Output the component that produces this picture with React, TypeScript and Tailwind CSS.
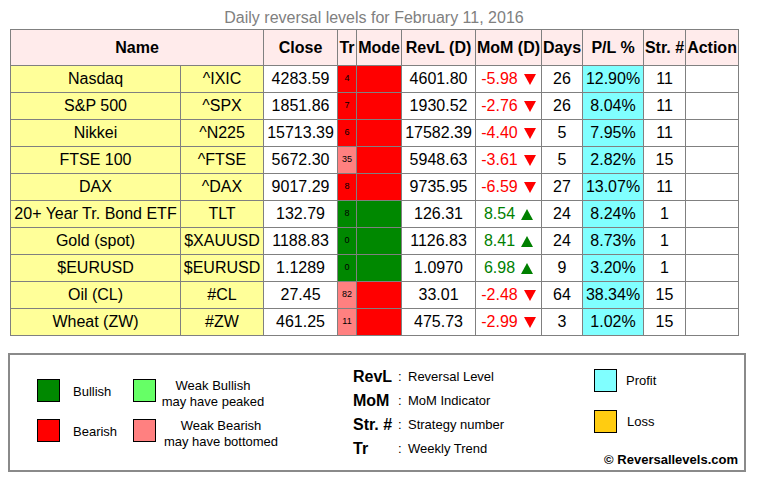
import React from "react";

type Row = {
  name: string;
  ticker: string;
  close: string;
  tr: number;
  trWeak: boolean;
  bull: boolean;
  revl: string;
  mom: string;
  days: number;
  pl: string;
  str: number;
};

const rows: Row[] = [
  { name: "Nasdaq", ticker: "^IXIC", close: "4283.59", tr: 4, trWeak: false, bull: false, revl: "4601.80", mom: "-5.98", days: 26, pl: "12.90%", str: 11 },
  { name: "S&P 500", ticker: "^SPX", close: "1851.86", tr: 7, trWeak: false, bull: false, revl: "1930.52", mom: "-2.76", days: 26, pl: "8.04%", str: 11 },
  { name: "Nikkei", ticker: "^N225", close: "15713.39", tr: 6, trWeak: false, bull: false, revl: "17582.39", mom: "-4.40", days: 5, pl: "7.95%", str: 11 },
  { name: "FTSE 100", ticker: "^FTSE", close: "5672.30", tr: 35, trWeak: true, bull: false, revl: "5948.63", mom: "-3.61", days: 5, pl: "2.82%", str: 15 },
  { name: "DAX", ticker: "^DAX", close: "9017.29", tr: 8, trWeak: false, bull: false, revl: "9735.95", mom: "-6.59", days: 27, pl: "13.07%", str: 11 },
  { name: "20+ Year Tr. Bond ETF", ticker: "TLT", close: "132.79", tr: 8, trWeak: false, bull: true, revl: "126.31", mom: "8.54", days: 24, pl: "8.24%", str: 1 },
  { name: "Gold (spot)", ticker: "$XAUUSD", close: "1188.83", tr: 0, trWeak: false, bull: true, revl: "1126.83", mom: "8.41", days: 24, pl: "8.73%", str: 1 },
  { name: "$EURUSD", ticker: "$EURUSD", close: "1.1289", tr: 0, trWeak: false, bull: true, revl: "1.0970", mom: "6.98", days: 9, pl: "3.20%", str: 1 },
  { name: "Oil (CL)", ticker: "#CL", close: "27.45", tr: 82, trWeak: true, bull: false, revl: "33.01", mom: "-2.48", days: 64, pl: "38.34%", str: 15 },
  { name: "Wheat (ZW)", ticker: "#ZW", close: "461.25", tr: 11, trWeak: true, bull: false, revl: "475.73", mom: "-2.99", days: 3, pl: "1.02%", str: 15 },
];

const cell = "border border-[#808080] p-0 text-center";

function trColor(r: Row) {
  if (r.bull) return r.trWeak ? "bg-[#66ff66]" : "bg-[#008800]";
  return r.trWeak ? "bg-[#ff8080]" : "bg-[#ff0000]";
}

function Arrow({ up }: { up: boolean }) {
  return (
    <svg width="12" height="11" viewBox="0 0 12 11" className="ml-[6px] inline-block">
      {up ? (
        <polygon points="6,0 12,11 0,11" fill="#008000" />
      ) : (
        <polygon points="0,0 12,0 6,11" fill="#ff0000" />
      )}
    </svg>
  );
}

function Abbr({ label, text }: { label: string; text: string }) {
  return (
    <div className="flex h-[24px] items-center">
      <span className="w-[45px] text-[16px] font-bold text-black">{label}</span>
      <span className="w-[10px] text-[13px] text-black">:</span>
      <span className="text-[13px] text-black">{text}</span>
    </div>
  );
}

export default function App() {
  return (
    <div
      className="h-[480px] w-[760px] bg-white text-black"
      style={{ fontFamily: '"Liberation Sans", Arial, sans-serif' }}
    >
      <div className="pl-[10px] pt-[7px]">
        <div className="w-[728px] text-center text-[16px] leading-[22px] text-[#808080]">
          Daily reversal levels for February 11, 2016
        </div>
        <table className="w-[728px] table-fixed border-collapse border border-[#808080] text-[16px]">
          <colgroup>
            <col className="w-[170px]" />
            <col className="w-[83px]" />
            <col className="w-[74px]" />
            <col className="w-[19px]" />
            <col className="w-[45px]" />
            <col className="w-[74px]" />
            <col className="w-[66px]" />
            <col className="w-[41px]" />
            <col className="w-[61px]" />
            <col className="w-[42px]" />
            <col className="w-[53px]" />
          </colgroup>
          <thead>
            <tr className="h-[36px] bg-[#ffebeb] font-bold">
              <th colSpan={2} className={cell}>Name</th>
              <th className={cell}>Close</th>
              <th className={cell}>Tr</th>
              <th className={cell}>Mode</th>
              <th className={`${cell} whitespace-nowrap`}>RevL (D)</th>
              <th className={`${cell} whitespace-nowrap`}>MoM (D)</th>
              <th className={cell}>Days</th>
              <th className={cell}>P/L %</th>
              <th className={`${cell} whitespace-nowrap`}>Str. #</th>
              <th className={cell}>Action</th>
            </tr>
          </thead>
          <tbody>
            {rows.map((r) => {
              const up = !r.mom.startsWith("-");
              return (
                <tr key={r.name} className="h-[27px]">
                  <td className={`${cell} whitespace-nowrap bg-[#ffff99]`}>{r.name}</td>
                  <td className={`${cell} bg-[#ffff99]`}>{r.ticker}</td>
                  <td className={cell}>{r.close}</td>
                  <td className={`${cell} text-[9px] ${trColor(r)}`}>{r.tr}</td>
                  <td className={`${cell} ${r.bull ? "bg-[#008800]" : "bg-[#ff0000]"}`}></td>
                  <td className={cell}>{r.revl}</td>
                  <td className={`${cell} whitespace-nowrap ${up ? "text-[#008000]" : "text-[#ff0000]"}`}>
                    {r.mom}
                    <Arrow up={up} />
                  </td>
                  <td className={cell}>{r.days}</td>
                  <td className={`${cell} bg-[#80ffff]`}>{r.pl}</td>
                  <td className={cell}>{r.str}</td>
                  <td className={cell}></td>
                </tr>
              );
            })}
          </tbody>
        </table>
      </div>

      <div className="ml-[8px] mt-[17px] flex h-[119px] w-[738px] border-2 border-[#8a8a8a] text-[13px]">
        <div className="ml-[27px] mt-[24px] flex w-[245px] flex-col gap-[17px]">
          <div className="flex h-[23px] items-center">
            <div className="h-[23px] w-[23px] border border-black bg-[#008800]" />
            <span className="ml-[13px] w-[60px] pt-[2px]">Bullish</span>
            <div className="h-[23px] w-[23px] border border-black bg-[#66ff66]" />
            <div className="ml-[4px] w-[106px] pt-[6px] text-center leading-[16px]">
              Weak Bullish
              <br />
              may have peaked
            </div>
          </div>
          <div className="flex h-[23px] items-center">
            <div className="h-[23px] w-[23px] border border-black bg-[#ff0000]" />
            <span className="ml-[13px] w-[60px] pt-[2px]">Bearish</span>
            <div className="h-[23px] w-[23px] border border-black bg-[#ff8080]" />
            <div className="ml-[4px] w-[122px] pt-[6px] text-center leading-[16px]">
              Weak Bearish
              <br />
              may have bottomed
            </div>
          </div>
        </div>

        <div className="ml-[71px] mt-[10px] flex w-[241px] flex-col">
          <Abbr label="RevL" text="Reversal Level" />
          <Abbr label="MoM" text="MoM Indicator" />
          <Abbr label="Str. #" text="Strategy number" />
          <Abbr label="Tr" text="Weekly Trend" />
        </div>

        <div className="flex flex-1 flex-col pr-[6px]">
          <div className="mt-[14px] flex items-center">
            <div className="h-[23px] w-[23px] border border-black bg-[#80ffff]" />
            <span className="ml-[9px]">Profit</span>
          </div>
          <div className="mt-[18px] flex items-center">
            <div className="h-[23px] w-[23px] border border-black bg-[#ffcc11]" />
            <span className="ml-[10px]">Loss</span>
          </div>
          <div className="mt-auto mb-[1px] self-end text-[13px] font-bold">© Reversallevels.com</div>
        </div>
      </div>
    </div>
  );
}
